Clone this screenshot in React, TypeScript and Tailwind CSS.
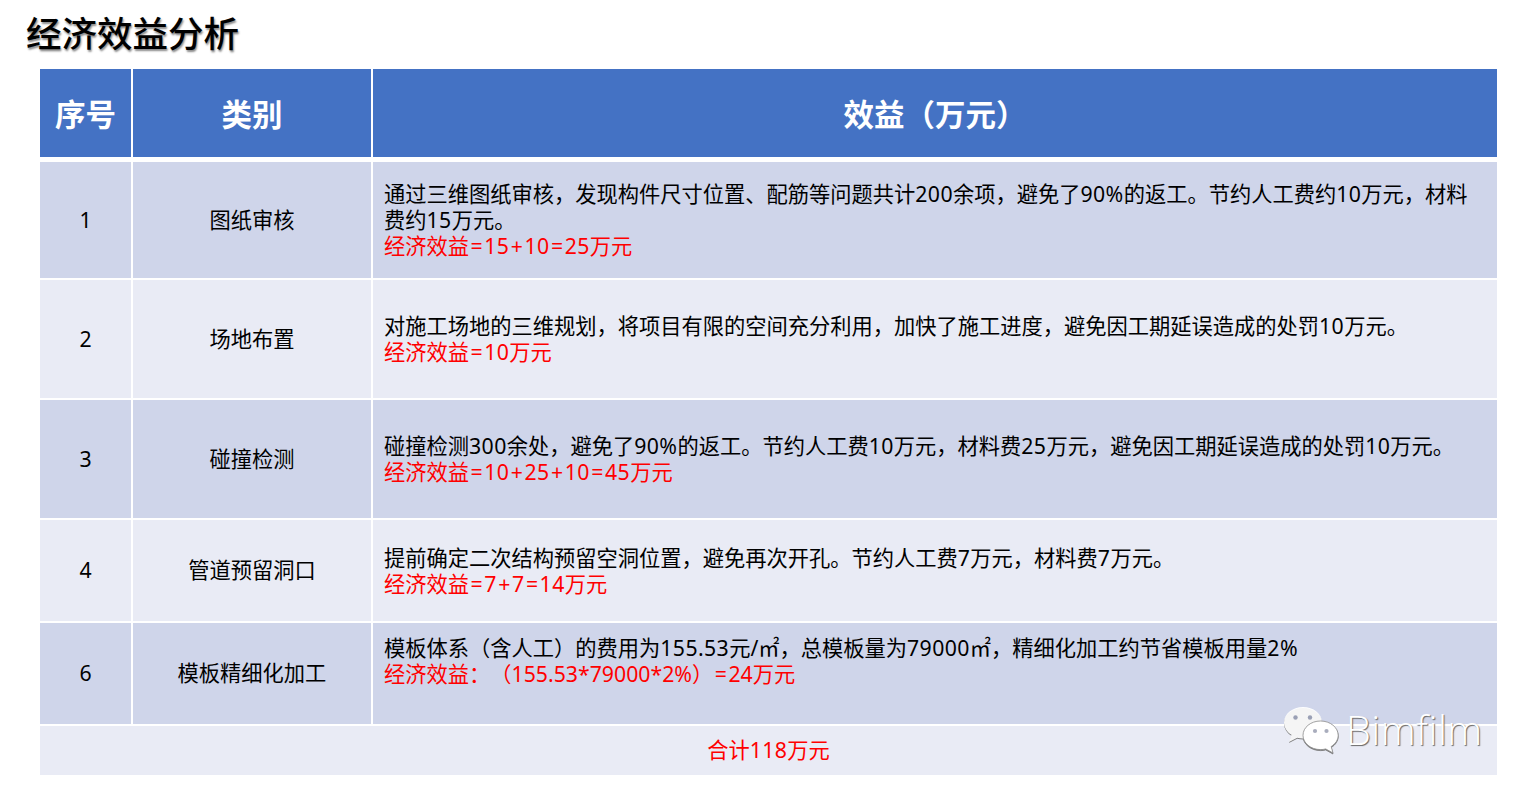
const font = { fontFamily: '"Noto Sans", "Noto Sans CJK SC", sans-serif' };

type Row = {
  no: string;
  name: string;
  text: string;
  red: string;
  height: string;
  bg: string;
  align?: string;
  tight?: boolean;
};

const rows: Row[] = [
  {
    no: "1",
    name: "图纸审核",
    text: "通过三维图纸审核，发现构件尺寸位置、配筋等问题共计200余项，避免了90%的返工。节约人工费约10万元，材料费约15万元。",
    red: "经济效益=15+10=25万元",
    height: "h-[116px]",
    bg: "bg-[#cfd5ea]",
  },
  {
    no: "2",
    name: "场地布置",
    text: "对施工场地的三维规划，将项目有限的空间充分利用，加快了施工进度，避免因工期延误造成的处罚10万元。",
    red: "经济效益=10万元",
    height: "h-[118px]",
    bg: "bg-[#e9ebf5]",
  },
  {
    no: "3",
    name: "碰撞检测",
    text: "碰撞检测300余处，避免了90%的返工。节约人工费10万元，材料费25万元，避免因工期延误造成的处罚10万元。",
    red: "经济效益=10+25+10=45万元",
    height: "h-[118px]",
    bg: "bg-[#cfd5ea]",
  },
  {
    no: "4",
    name: "管道预留洞口",
    text: "提前确定二次结构预留空洞位置，避免再次开孔。节约人工费7万元，材料费7万元。",
    red: "经济效益=7+7=14万元",
    height: "h-[101px]",
    bg: "bg-[#e9ebf5]",
  },
  {
    no: "6",
    name: "模板精细化加工",
    text: "模板体系（含人工）的费用为155.53元/㎡，总模板量为79000㎡，精细化加工约节省模板用量2%",
    red: "经济效益：（155.53*79000*2%）=24万元",
    height: "h-[101px]",
    bg: "bg-[#cfd5ea]",
    align: "pt-[12px]",
    tight: true,
  },
];

// digits and operators sit a little wider in the original than in Noto Sans
function Rich({ text, tight }: { text: string; tight?: boolean }) {
  return (
    <>
      {text.split(/([0-9.%*]+|[=+])/).map((part, i) => {
        if (/^[=+]$/.test(part)) {
          return (
            <span key={i} className="mx-[1.500px]">
              {part}
            </span>
          );
        }
        if (/^[0-9.%*]+$/.test(part)) {
          return (
            <span key={i} className={tight ? "" : "tracking-[0.4px]"}>
              {part}
            </span>
          );
        }
        return <span key={i}>{part}</span>;
      })}
    </>
  );
}

function WeChatLogo() {
  return (
    <svg width="56" height="48" viewBox="0 0 56 48" className="drop-shadow-[0_1px_0_#777]">
      <path
        d="M20 1C9.5 1 1 8 1 16.5c0 5 3 9.500 7.500 12.300L6 36l8.200-4.300c1.900.5 3.800.8 5.800.8 10.500 0 19-7 19-16S30.500 1 20 1Z"
        fill="#fff"
        fillOpacity="0.92"
      />
      <path
        d="M37.500 15C27.800 15 20 21.400 20 29.300s7.800 14.300 17.500 14.300c1.800 0 3.600-.2 5.200-.7L50 47l-1.800-6.500c4.300-2.600 7-6.700 7-11.200C55.200 21.400 47.200 15 37.500 15Z"
        fill="#fff"
        stroke="#8b8b8b"
        strokeWidth="0.8"
      />
      <circle cx="12.500" cy="11.500" r="2.200" fill="#9aa0b5" />
      <circle cx="27" cy="11.500" r="2.200" fill="#9aa0b5" />
      <circle cx="32" cy="25" r="2.100" fill="#a9adbd" />
      <circle cx="43.500" cy="25" r="2.100" fill="#a9adbd" />
    </svg>
  );
}

export default function App() {
  return (
    <div className="relative h-[797px] w-[1533px] overflow-hidden bg-white [text-spacing-trim:space-all]" style={font}>
      <h1 className="pl-[26px] pt-[10px] h-[69px] text-[35.500px] leading-[46px] font-medium text-black [text-shadow:1px_2px_2px_#8a8a8a]">
        经济效益分析
      </h1>

      <div className="ml-[40px] w-[1457px] flex flex-col">
        {/* Header */}
        <div className="flex h-[88px] gap-[2px] text-white text-[30.500px] font-bold">
          <div className="w-[91px] bg-[#4472c4] flex items-center justify-center pt-[4px]">序号</div>
          <div className="w-[238px] bg-[#4472c4] flex items-center justify-center pt-[4px]">类别</div>
          <div className="flex-1 bg-[#4472c4] flex items-center justify-center pt-[4px]">效益（万元）</div>
        </div>

        {/* Body rows */}
        <div className="mt-[5px] flex flex-col gap-[2px] text-[21.250px] leading-[26px] text-black">
          {rows.map((r) => (
            <div key={r.no} className={`flex gap-[2px] ${r.height}`}>
              <div className={`w-[91px] ${r.bg} flex items-center justify-center pb-[1px]`}>{r.no}</div>
              <div className={`w-[238px] ${r.bg} flex items-center justify-center pb-[1px]`}>{r.name}</div>
              <div className={`flex-1 ${r.bg} pl-[11px] pr-[12px] flex flex-col ${r.align ?? "justify-center"}`}>
                <p>
                  <Rich text={r.text} />
                </p>
                <p className="text-[#ff0000]">
                  <Rich text={r.red} tight={r.tight} />
                </p>
              </div>
            </div>
          ))}
          <div className="h-[49px] bg-[#e9ebf5] flex items-center justify-center text-[#ff0000] pb-[1px]">
            <Rich text="合计118万元" />
          </div>
        </div>
      </div>

      {/* Watermark */}
      <div className="absolute left-[1283px] top-[706px] flex items-center gap-[7px]">
        <WeChatLogo />
        <span
          className="text-[39.500px] leading-[48px] font-light text-white tracking-[0.5px] [text-shadow:1px_1px_1px_#666]"
          style={{ fontFamily: '"Open Sans", sans-serif' }}
        >
          Bimfilm
        </span>
      </div>
    </div>
  );
}
